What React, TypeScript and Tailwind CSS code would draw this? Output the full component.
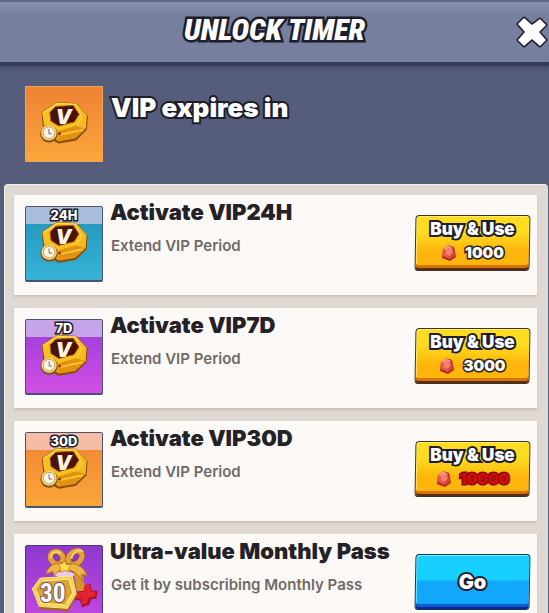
import clsx from "clsx";

type Tone = "sky" | "violet" | "orange";

type Offer = {
  id: string;
  badge: string;
  tone: Tone;
  title: string;
  price: number;
  affordable: boolean;
};

const OFFERS: Offer[] = [
  { id: "vip-24h", badge: "24H", tone: "sky", title: "Activate VIP24H", price: 1000, affordable: true },
  { id: "vip-7d", badge: "7D", tone: "violet", title: "Activate VIP7D", price: 3000, affordable: true },
  { id: "vip-30d", badge: "30D", tone: "orange", title: "Activate VIP30D", price: 10000, affordable: false },
];

const TILE: Record<Tone, string> = {
  sky: "from-[#1f93b8] to-[#38b3d8]",
  violet: "from-[#9b3cd6] to-[#d04ee6]",
  orange: "from-[#ee8233] to-[#fba63a]",
};

const BADGE: Record<Tone, string> = {
  sky: "bg-[#a9bedd]",
  violet: "bg-[#c6a4ea]",
  orange: "bg-[#f5bda6]",
};

const OUTLINE = "text-white [paint-order:stroke_fill] [-webkit-text-stroke-color:#1d1d2b]";

function VipCoin() {
  return (
    <svg viewBox="0 0 77 76" className="absolute inset-0 size-full" aria-hidden="true">
      <path d="M16 27 31 17 51 18 63 30 62 44 51 55 33 58 18 50Z" fill="#8a4a0c" />
      <path d="M16 26 31 16 51 17 62 29 61 43 50 53 33 56 18 48Z" fill="#eda317" stroke="#7a4a10" strokeWidth="1" />
      <path d="M16 26 31 16 51 17 57 31 51 40 33 45 18 38Z" fill="#f9c022" />
      <path d="M51 17 62 29 61 43 51 40 57 31Z" fill="#f6b81f" />
      <path d="M33 45 51 40 61 43 50 53 33 56Z" fill="#e2920f" />
      <path d="M34 49 58 44" stroke="#f7c53a" strokeWidth="2" />
      <path d="M18 26 32 17 51 18" stroke="#ffe56b" strokeWidth="1" fill="none" />
      <path d="M51 18 57 31 52 39" stroke="#ffdf60" strokeWidth="1" fill="none" />
      <path d="M24 26 30 20 48 19 54 28 49 36 33 40 25 35Z" fill="#4a1208" stroke="#a3560c" strokeWidth="1" />
      <text
        x="38"
        y="38"
        textAnchor="middle"
        fontFamily="Inter, sans-serif"
        fontSize="21"
        fontWeight="900"
        fontStyle="italic"
        fill="#fff3df"
      >
        V
      </text>
      <circle cx="23" cy="48" r="9" fill="#7d5618" />
      <circle cx="23" cy="47" r="8" fill="#f6d68a" />
      <circle cx="23" cy="47" r="6" fill="#fdf6e4" stroke="#cfa14c" strokeWidth="1" />
      <path d="M23 43v5h3" stroke="#6e6680" strokeWidth="1" fill="none" />
      <circle cx="34" cy="48" r="1.5" fill="#9c2c10" />
    </svg>
  );
}

function GiftArt() {
  return (
    <svg viewBox="0 0 77 76" className="absolute inset-0 size-full" aria-hidden="true">
      <path d="M27 27 42 23 60 30 59 54 40 62 27 52Z" fill="#9a45d6" />
      <path d="M27 29 40 24 50 29 43 37Z" fill="#ecc9ee" />
      <path d="M48 24 58 29 61 50 53 54Z" fill="#d8952a" />
      <ellipse cx="31" cy="12" rx="7" ry="6" transform="rotate(40 31 12)" fill="#8c35bd" stroke="#a35f19" strokeWidth="6" />
      <ellipse cx="50" cy="12" rx="8" ry="6" transform="rotate(-45 50 12)" fill="#8c35bd" stroke="#a35f19" strokeWidth="6" />
      <ellipse cx="31" cy="12" rx="7" ry="6" transform="rotate(40 31 12)" fill="none" stroke="#e6a238" strokeWidth="5" />
      <ellipse cx="50" cy="12" rx="8" ry="6" transform="rotate(-45 50 12)" fill="none" stroke="#e6a238" strokeWidth="5" />
      <path d="M25 12c0-6 6-8 10-4M46 13c2-7 8-11 12-7" stroke="#f9d577" strokeWidth="2" fill="none" />
      <path d="M37 17C28 17 22 21 20 29l7-3 1 5c3-5 7-7 12-8Z" fill="#edb544" stroke="#b8761f" strokeWidth="1" />
      <path d="M42 18c10-1 17 4 20 12l-6-1 2 9c-4-9-9-12-16-14Z" fill="#edb544" stroke="#b8761f" strokeWidth="1" />
      <path d="m39 15 2 4 5 0-3 4 1 4-5-2-4 2 0-5-3-3 5-1Z" fill="#ffdc50" stroke="#c78a20" strokeWidth="1" />
      <path d="m60 40 6-1 1 7 6 0-1 8-6 1-1 5-8 3-2-7-6-1 1-8 9-1Z" fill="#a8122b" />
      <path d="m60 40 5-1 1 8 5 0-1 5-6 1-2 6-5 1-1-6-7 0 1-6 8-1Z" fill="#e32331" />
      <path d="M6 44 14 33 48 31 52 50 43 67 14 65Z" fill="#a5681a" />
      <path d="M6 44 14 33 47 31 51 49 42 64 13 62Z" fill="#f8cf4b" stroke="#fbe68d" strokeWidth="1" />
      <path d="M10 44 16 36 44 34 48 48 40 60 16 58Z" fill="#dca232" />
      <path d="m10 46 5 13 25 2M16 36 44 34" stroke="#fff0a0" strokeWidth="1" fill="none" />
      <path d="M44 35 48 48 41 59" stroke="#ffe47a" strokeWidth="2" fill="none" />
      <text
        x="27"
        y="57"
        textAnchor="middle"
        fontFamily="Roboto Condensed, Roboto, sans-serif"
        fontSize="26"
        fontWeight="700"
        fill="#fff"
        stroke="#7b4b6c"
        strokeWidth="2"
        paintOrder="stroke"
      >
        30
      </text>
    </svg>
  );
}

function Gem() {
  return (
    <svg viewBox="0 0 16 18" className="h-[18px] w-4" aria-hidden="true">
      <path d="M2 5 7 1 13 3 15 13 9 17 1 14Z" fill="#b5241f" />
      <path d="M2 5 7 1 12 4 8 8Z" fill="#f49a86" />
      <path d="M12 4 14 12 9 15 8 8Z" fill="#d6463b" />
      <path d="M2 5 8 8 9 15 2 12Z" fill="#e25a4b" />
      <path d="M5 5 9 3 12 8 9 12 5 10Z" fill="#f47f6e" />
    </svg>
  );
}

function Tile({ tone, badge }: { tone: Tone; badge?: string }) {
  return (
    <div
      className={clsx(
        "relative h-[76px] w-[78px] shrink-0 overflow-hidden bg-linear-to-b",
        TILE[tone],
        badge ? "rounded-xs border border-b-2 border-[#4a5374]" : "border border-[#f3a25a]",
      )}
    >
      {badge && (
        <div className={clsx("flex h-[17px] items-center justify-center", BADGE[tone])}>
          <span className={clsx("text-[13px] font-extrabold [-webkit-text-stroke-width:3px]", OUTLINE)}>{badge}</span>
        </div>
      )}
      <VipCoin />
    </div>
  );
}

const BUTTON =
  "relative isolate flex h-14 w-[115px] shrink-0 flex-col items-center before:absolute before:inset-0 before:-z-10 before:-skew-x-1 before:rounded-sm before:border before:border-[#3d3426]";

function BuyButton({ price, affordable }: { price: number; affordable: boolean }) {
  return (
    <button
      type="button"
      className={clsx(
        BUTTON,
        "pt-1 before:bg-linear-to-b before:from-[#ffdc1f] before:from-30% before:to-[#ffb50c] before:to-65% before:shadow-[inset_0_-2px_0_#5a2c14,inset_0_-5px_0_#d47408,inset_1px_1px_0_#ffee70]",
      )}
    >
      <span className={clsx("text-[17px] leading-5 font-black whitespace-nowrap [-webkit-text-stroke-width:4px]", OUTLINE)}>
        Buy &amp; Use
      </span>
      <span className="mt-1 flex items-center gap-2">
        <Gem />
        <span
          className={clsx(
            "text-[15px] leading-5 font-black [paint-order:stroke_fill] [-webkit-text-stroke-width:3px]",
            affordable ? "text-white [-webkit-text-stroke-color:#2b2622]" : "text-[#d40b0b] [-webkit-text-stroke-color:#8c0808]",
          )}
        >
          {price}
        </span>
      </span>
    </button>
  );
}

function Card({ icon, title, text, action }: { icon: React.ReactNode; title: string; text: string; action: React.ReactNode }) {
  return (
    <li className="flex h-[100px] items-start bg-[#fdf9f6] pt-[11px] pr-[7px] pl-[11px] shadow-[0_2px_2px_#c9c1bc]">
      {icon}
      <div className="min-w-0 flex-1 pl-[7px]">
        <h2 className="-mt-1.5 text-[22px] leading-6 font-black whitespace-nowrap text-[#242127]">{title}</h2>
        <p className="mt-2.5 pl-px text-[15px] leading-6 font-semibold whitespace-nowrap text-[#6f6a68]">{text}</p>
      </div>
      <div className="pt-[9px]">{action}</div>
    </li>
  );
}

export default function App() {
  return (
    <div className="flex h-screen flex-col overflow-hidden bg-[#555d7b] font-[Inter,sans-serif]">
      <header className="relative flex h-[66px] shrink-0 items-center justify-center border-t-2 border-b-4 border-t-[#5f6887] border-b-[#343b5a] bg-linear-to-b from-[#858eac] from-5% to-[#767f9d] to-20% pb-1 shadow-[0_2px_4px_#4a4968]">
        <h1
          className={clsx(
            "pr-0 font-['Roboto_Condensed','Open_Sans_Condensed','Noto_Sans_Condensed',Roboto,sans-serif] text-3xl font-black italic [-webkit-text-stroke-width:5px] [text-shadow:0_2px_0_#1d1d2b]",
            OUTLINE,
          )}
        >
          UNLOCK TIMER
        </h1>
        <button type="button" aria-label="Close" className="absolute top-3 right-0">
          <svg viewBox="0 0 34 34" className="size-[34px]" aria-hidden="true">
            <path
              d="m9 4 8 7 8-6 6 6-7 7 7 8-6 6-8-7-8 7-6-6 7-8-7-8Z"
              fill="#fff"
              stroke="#1d1d2b"
              strokeWidth="3"
              strokeLinejoin="round"
              paintOrder="stroke"
            />
          </svg>
        </button>
      </header>

      <section className="flex shrink-0 gap-2 px-[25px] pt-5 pb-[22px]">
        <Tile tone="orange" />
        <p className={clsx("pt-0.5 text-[26px] font-black [-webkit-text-stroke-width:4px]", OUTLINE)}>VIP expires in</p>
      </section>

      <main className="mr-px ml-1 flex-1 rounded-t-sm border-t border-l border-[#f1ece6] bg-[#dfd8d3] pt-2.5 pr-[11px] pl-[9px]">
        <ul className="flex flex-col gap-[13px]">
          {OFFERS.map((o) => (
            <Card
              key={o.id}
              icon={<Tile tone={o.tone} badge={o.badge} />}
              title={o.title}
              text="Extend VIP Period"
              action={<BuyButton price={o.price} affordable={o.affordable} />}
            />
          ))}
          <Card
            icon={
              <div className="relative h-[76px] w-[78px] shrink-0 overflow-hidden rounded-xs border border-[#4a3a78] bg-linear-to-b from-[#8f38cf] to-[#c248e0]">
                <GiftArt />
              </div>
            }
            title="Ultra-value Monthly Pass"
            text="Get it by subscribing Monthly Pass"
            action={
              <button
                type="button"
                className={clsx(
                  BUTTON,
                  "justify-center before:border-[#15355f] before:bg-linear-to-b before:from-[#17d0fd] before:from-45% before:to-[#12a7fb] before:to-50% before:shadow-[inset_0_-2px_0_#0b2c86,inset_0_-5px_0_#0d5cd4,inset_1px_1px_0_#7ff0ff]",
                )}
              >
                <span className={clsx("text-xl font-black [-webkit-text-stroke-width:4px]", OUTLINE)}>Go</span>
              </button>
            }
          />
        </ul>
      </main>
    </div>
  );
}
